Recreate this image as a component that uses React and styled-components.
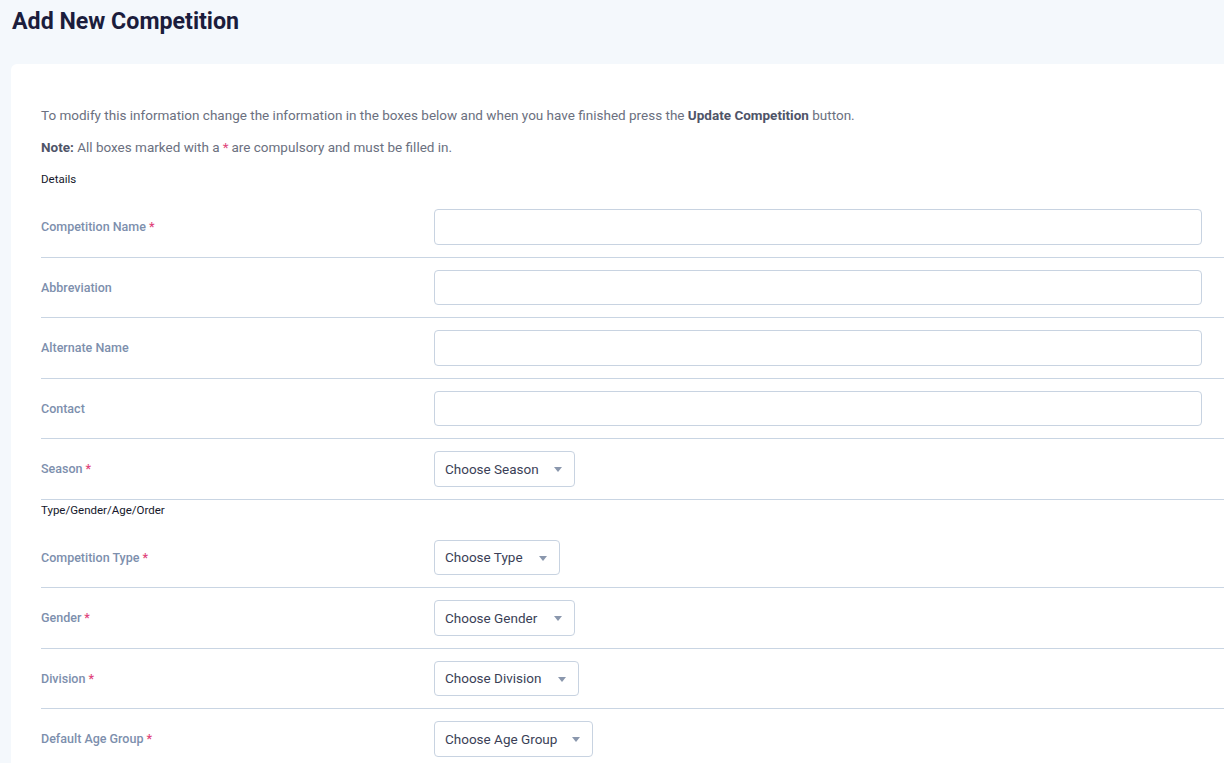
import React from 'react'
import styled, { createGlobalStyle } from 'styled-components'

const GlobalStyle = createGlobalStyle`
  html, body {
    margin: 0;
    padding: 0;
    background: #f4f8fc;
    font-family: Roboto, "Noto Sans", Arial, sans-serif;
    overflow-x: hidden;
  }
  * { box-sizing: border-box; }
`

const Page = styled.div`
  padding: 6px 0 0 11px;
  min-height: 100vh;
`

const Title = styled.h1`
  margin: 0 0 0 1px;
  font-size: 23.2px;
  line-height: 30px;
  font-weight: 700;
  color: #1b1d3c;
`

const Card = styled.div`
  margin-top: 28px;
  margin-right: -40px;
  background: #fff;
  border-radius: 6px;
  padding: 41px 0 20px 30px;
`

const Intro = styled.p`
  margin: 0 0 12px;
  font-size: 13.5px;
  line-height: 20px;
  color: #6b7080;

  b {
    color: #4f5468;
    font-weight: 700;
  }
`

const Star = styled.span`
  color: #e0457b;
  margin-left: 3px;
`

const SectionHead = styled.div`
  font-size: 11.5px;
  line-height: 20px;
  color: #15172b;
  margin-bottom: 8px;
`

const Row = styled.div`
  display: grid;
  grid-template-columns: 393px 768px;
  align-items: center;
  padding: 12px 0;
  border-bottom: ${p => (p.$last ? 'none' : '1px solid #c9d5e3')};
`

const Label = styled.label`
  font-size: 12.5px;
  font-weight: 500;
  color: #7d8fad;
`

const TextInput = styled.input`
  height: 35.5px;
  width: 100%;
  border: 1px solid #c8d3e1;
  border-radius: 4px;
  background: #fff;
  outline: none;
`

const SelectBox = styled.div`
  height: 35.5px;
  width: ${p => p.$w}px;
  display: flex;
  align-items: center;
  justify-content: space-between;
  padding: 0 12px 0 10px;
  border: 1px solid #c8d3e1;
  border-radius: 4px;
  font-size: 13.5px;
  color: #3b3f57;
`

const Caret = styled.span`
  width: 0;
  height: 0;
  border-left: 4px solid transparent;
  border-right: 4px solid transparent;
  border-top: 5px solid #8a97ad;
  margin-top: 2px;
`

const textRows = [
  { label: 'Competition Name', req: true },
  { label: 'Abbreviation' },
  { label: 'Alternate Name' },
  { label: 'Contact' },
]

const typeRows = [
  { label: 'Competition Type', text: 'Choose Type', w: 126 },
  { label: 'Gender', text: 'Choose Gender', w: 141 },
  { label: 'Division', text: 'Choose Division', w: 145 },
  { label: 'Default Age Group', text: 'Choose Age Group', w: 159 },
]

const Select = ({ text, w }) => (
  <SelectBox $w={w}>
    {text}
    <Caret />
  </SelectBox>
)

export default function App() {
  return (
    <>
      <GlobalStyle />
      <Page>
        <Title>Add New Competition</Title>
        <Card>
          <Intro>
            To modify this information change the information in the boxes below and when you have finished press the <b>Update Competition</b> button.
          </Intro>
          <Intro>
            <b>Note:</b> All boxes marked with a<Star style={{ marginRight: 3 }}>*</Star>are compulsory and must be filled in.
          </Intro>
          <SectionHead>Details</SectionHead>
          {textRows.map(r => (
            <Row key={r.label}>
              <Label>
                {r.label}
                {r.req && <Star>*</Star>}
              </Label>
              <TextInput type="text" />
            </Row>
          ))}
          <Row>
            <Label>
              Season<Star>*</Star>
            </Label>
            <Select text="Choose Season" w={141} />
          </Row>
          <SectionHead>Type/Gender/Age/Order</SectionHead>
          {typeRows.map((r, i) => (
            <Row key={r.label} $last={i === typeRows.length - 1}>
              <Label>
                {r.label}
                <Star>*</Star>
              </Label>
              <Select text={r.text} w={r.w} />
            </Row>
          ))}
        </Card>
      </Page>
    </>
  )
}
